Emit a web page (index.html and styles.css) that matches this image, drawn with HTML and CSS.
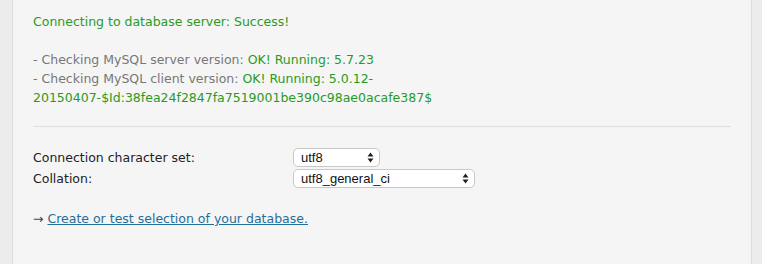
FILE: index.html
```html
<!DOCTYPE html>
<html>
<head>
<meta charset="utf-8">
<link rel="stylesheet" href="styles.css">
</head>
<body>
<div class="panel">
  <p class="status">
    <span class="ok">Connecting to database server: Success!</span><br><br>
    <span class="muted">- Checking MySQL server version: </span><span class="ok">OK! Running: 5.7.23</span><br>
    <span class="muted">- Checking MySQL client version: </span><span class="ok">OK! Running: 5.0.12-</span><wbr><span class="ok">20150407-$Id:38fea24f2847fa7519001be390c98ae0acafe387$</span>
  </p>
  <hr class="sep">
  <div class="form">
    <div class="row">
      <label class="lbl">Connection character set:</label>
      <div class="sel sel-short"><span>utf8</span><span class="arrows"><svg width="7" height="11" viewBox="0 0 7 11"><path d="M3.5 0.5 L6.5 4.5 L0.5 4.5 Z M3.5 10.5 L6.5 6.5 L0.5 6.5 Z" fill="#222"/></svg></span></div>
    </div>
    <div class="row">
      <label class="lbl">Collation:</label>
      <div class="sel sel-long"><span>utf8_general_ci</span><span class="arrows"><svg width="7" height="11" viewBox="0 0 7 11"><path d="M3.5 0.5 L6.5 4.5 L0.5 4.5 Z M3.5 10.5 L6.5 6.5 L0.5 6.5 Z" fill="#222"/></svg></span></div>
    </div>
  </div>
  <p class="next"><span class="arr">→</span> <a href="#" class="link">Create or test selection of your database.</a></p>
</div>
</body>
</html>
```
FILE: styles.css
```css
html, body {
  margin: 0;
  padding: 0;
}
body {
  background: #ececec;
  width: 762px;
  height: 264px;
  overflow: hidden;
  font-family: "DejaVu Sans", Verdana, sans-serif;
  font-size: 12.5px;
}
.panel {
  margin-left: 12px;
  width: 740px;
  height: 264px;
  background: #f5f5f5;
  border-left: 1px solid #dcdcdc;
  border-right: 1px solid #dcdcdc;
  padding: 12px 20px 0 20px;
  box-sizing: border-box;
}
.status {
  margin: 0;
  line-height: 19px;
}
.ok { color: #2a9a1f; }
.muted { color: #777; }
.sep {
  border: 0;
  border-top: 1px solid #dedede;
  margin: 19px 0 0 0;
  height: 0;
}
.form {
  margin-top: 21px;
  display: flex;
  flex-direction: column;
  gap: 2px;
}
.row {
  display: flex;
  align-items: center;
  height: 19px;
}
.lbl {
  width: 260px;
  color: #222;
}
.sel {
  box-sizing: border-box;
  height: 19px;
  border: 1px solid #c8c8c8;
  border-radius: 5px;
  background: #fff;
  display: flex;
  align-items: center;
  justify-content: space-between;
  padding: 0 5px 0 7px;
  font-family: "Liberation Sans", Arial, sans-serif;
  font-size: 13px;
  color: #111;
}
.sel-short { width: 87px; }
.sel-long { width: 182px; }
.arrows { display: flex; align-items: center; }
.next {
  margin: 21px 0 0 0;
  line-height: 19px;
  color: #555;
}
.arr { color: #444; }
.link {
  color: #1f6f99;
  text-decoration: underline;
}
```
